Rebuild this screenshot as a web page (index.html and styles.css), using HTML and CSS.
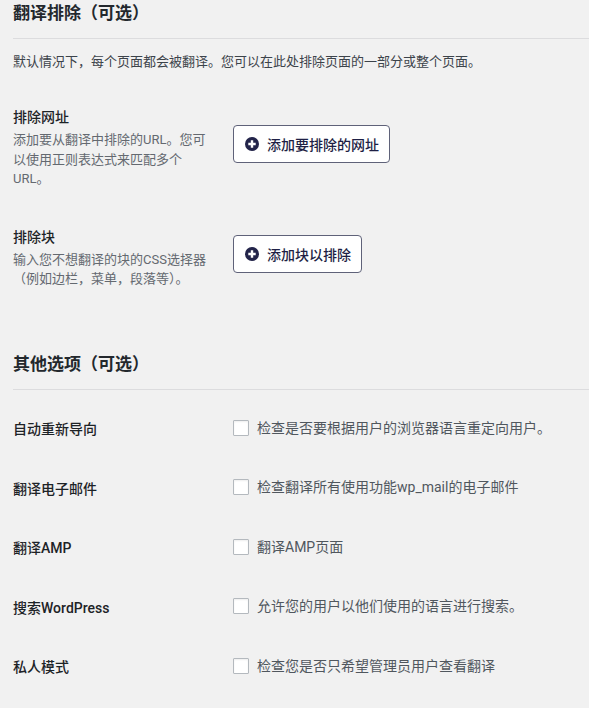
FILE: index.html
```html
<!DOCTYPE html>
<html lang="zh-CN">
<head>
<meta charset="utf-8">
<title>翻译排除</title>
<link rel="stylesheet" href="styles.css">
</head>
<body>
<div class="page">
  <section class="section">
    <h2 class="section-title">翻译排除（可选）</h2>
    <div class="rule"></div>
    <p class="intro">默认情况下，每个页面都会被翻译。您可以在此处排除页面的一部分或整个页面。</p>

    <div class="row row-first">
      <div class="label-col">
        <div class="label">排除网址</div>
        <p class="desc">添加要从翻译中排除的URL。您可以使用正则表达式来匹配多个URL。</p>
      </div>
      <div class="field-col">
        <button class="add-btn" type="button">
          <svg class="plus" viewBox="0 0 14 14" width="14" height="14" aria-hidden="true">
            <circle cx="7" cy="7" r="7" fill="#23244a"/>
            <path d="M7 3.3v7.4M3.3 7h7.4" stroke="#fff" stroke-width="2.4" stroke-linecap="butt"/>
          </svg>
          <span>添加要排除的网址</span>
        </button>
      </div>
    </div>

    <div class="row row-second">
      <div class="label-col">
        <div class="label">排除块</div>
        <p class="desc">输入您不想翻译的块的CSS选择器（例如边栏，菜单，段落等）。</p>
      </div>
      <div class="field-col">
        <button class="add-btn" type="button">
          <svg class="plus" viewBox="0 0 14 14" width="14" height="14" aria-hidden="true">
            <circle cx="7" cy="7" r="7" fill="#23244a"/>
            <path d="M7 3.3v7.4M3.3 7h7.4" stroke="#fff" stroke-width="2.4" stroke-linecap="butt"/>
          </svg>
          <span>添加块以排除</span>
        </button>
      </div>
    </div>
  </section>

  <section class="section section-other">
    <h2 class="section-title">其他选项（可选）</h2>
    <div class="rule"></div>
    <div class="options">
      <div class="opt-row">
        <div class="opt-label">自动重新导向</div>
        <label class="opt-field"><span class="check"></span><span>检查是否要根据用户的浏览器语言重定向用户。</span></label>
      </div>
      <div class="opt-row">
        <div class="opt-label">翻译电子邮件</div>
        <label class="opt-field"><span class="check"></span><span>检查翻译所有使用功能wp_mail的电子邮件</span></label>
      </div>
      <div class="opt-row">
        <div class="opt-label">翻译AMP</div>
        <label class="opt-field"><span class="check"></span><span>翻译AMP页面</span></label>
      </div>
      <div class="opt-row">
        <div class="opt-label">搜索WordPress</div>
        <label class="opt-field"><span class="check"></span><span>允许您的用户以他们使用的语言进行搜索。</span></label>
      </div>
      <div class="opt-row">
        <div class="opt-label">私人模式</div>
        <label class="opt-field"><span class="check"></span><span>检查您是否只希望管理员用户查看翻译</span></label>
      </div>
    </div>
  </section>
</div>
</body>
</html>
```

FILE: styles.css
```css
html, body {
  margin: 0;
  padding: 0;
  background: #f1f1f1;
}

body {
  font-family: Roboto, "Noto Sans CJK SC", sans-serif;
  color: #3c434a;
  font-size: 13px;
  overflow: hidden;
}

.page {
  padding-left: 13px;
}

.section-title {
  margin: 1px 0 0;
  font-size: 17px;
  line-height: 24px;
  font-weight: 600;
  color: #23282d;
}

.rule {
  margin-top: 13px;
  height: 1px;
  background: #dcdcde;
}

.intro {
  margin: 13px 0 0;
  font-size: 13px;
  line-height: 20px;
  color: #3c434a;
}

.row {
  display: grid;
  grid-template-columns: 220px 1fr;
  align-items: center;
}

.row-first {
  margin-top: 35px;
}

.row-second {
  margin-top: 38px;
}

.label-col {
  width: 200px;
}

.label {
  font-size: 14px;
  line-height: 20px;
  font-weight: 500;
  color: #1d2327;
}

.desc {
  margin: 3px 0 0;
  font-size: 13px;
  line-height: 19.5px;
  color: #646970;
}

.field-col {
  margin-bottom: 8px;
}

.add-btn {
  display: inline-flex;
  align-items: center;
  gap: 8px;
  height: 38px;
  box-sizing: border-box;
  padding: 0 10px 0 11px;
  background: #fff;
  border: 1px solid #5f6279;
  border-radius: 4px;
  font-family: Roboto, "Noto Sans CJK SC", sans-serif;
  font-size: 14px;
  font-weight: 500;
  color: #1e1f45;
  cursor: pointer;
}

.plus {
  display: block;
  flex: none;
  width: 14px;
  height: 14px;
}

.section-other {
  margin-top: 63px;
}

.options {
  margin-top: 10px;
}

.opt-row {
  display: grid;
  grid-template-columns: 220px 1fr;
  align-items: center;
  height: 59.5px;
}

.opt-label {
  font-size: 14px;
  line-height: 20px;
  font-weight: 500;
  color: #1d2327;
}

.opt-field {
  display: flex;
  align-items: center;
  gap: 8px;
  margin-bottom: 3px;
  font-size: 14px;
  line-height: 20px;
  color: #50575e;
}

.check {
  flex: none;
  width: 16px;
  height: 16px;
  box-sizing: border-box;
  background: #fff;
  border: 1px solid #b4b9be;
  border-radius: 1px;
  box-shadow: inset 0 1px 2px rgba(0, 0, 0, 0.07);
}
```
